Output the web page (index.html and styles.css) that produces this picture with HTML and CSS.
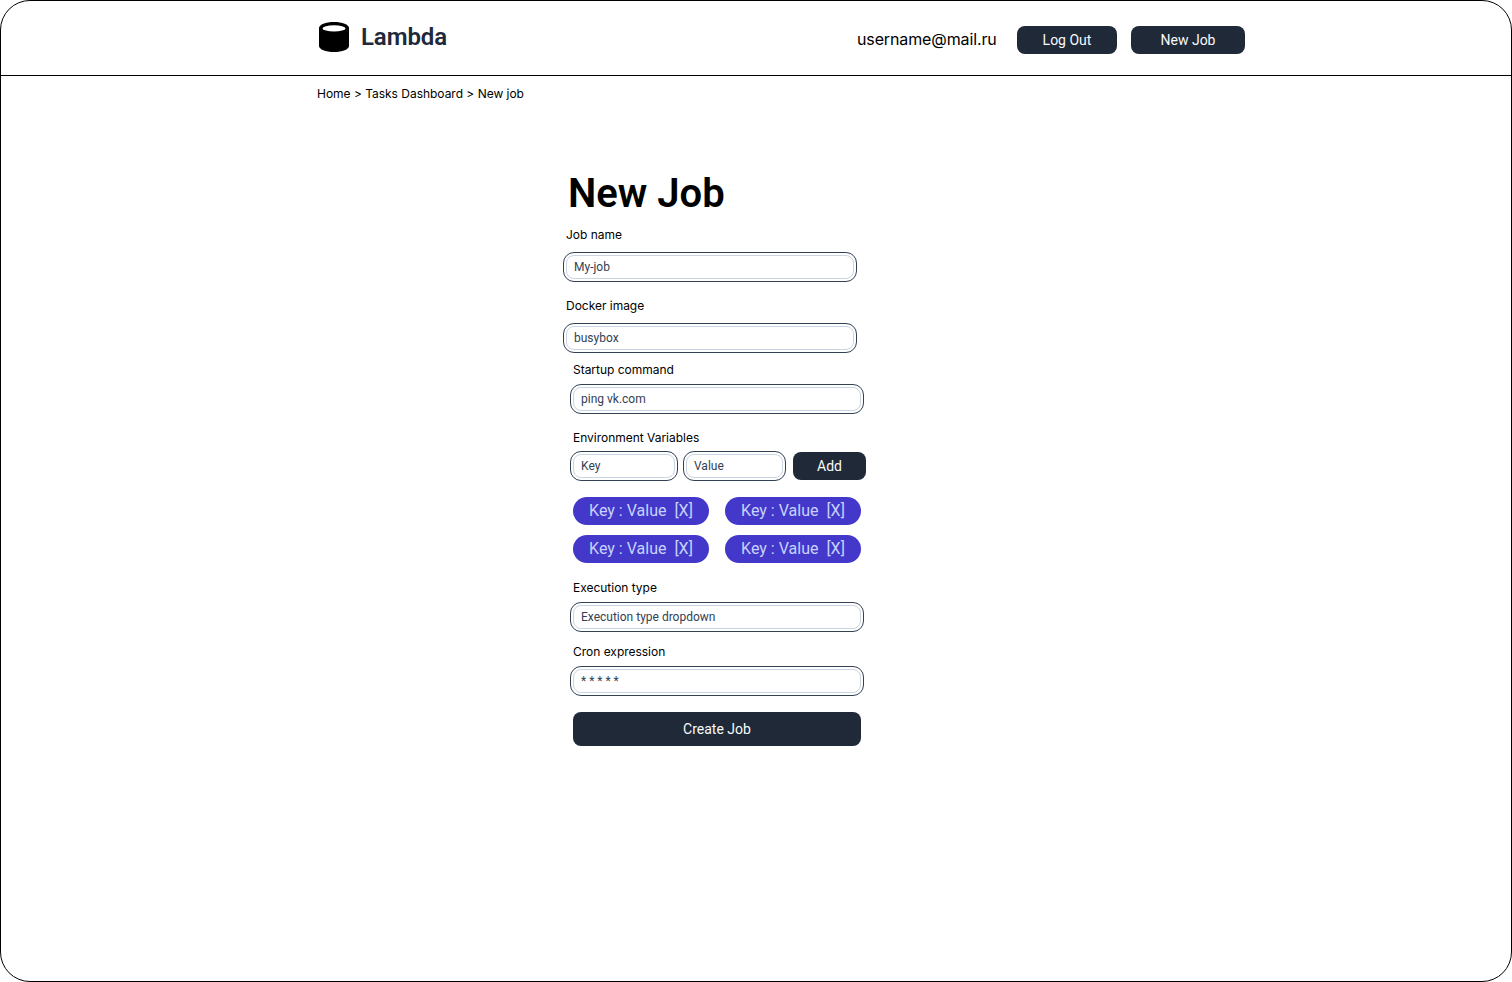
FILE: index.html
```html
<!DOCTYPE html>
<html lang="en">
<head>
<meta charset="utf-8">
<title>Lambda - New Job</title>
<link rel="stylesheet" href="styles.css">
</head>
<body>
<div class="page">
  <header class="header">
    <svg class="logo" width="30" height="30" viewBox="0 0 30 30"><path d="M0 6C0 2.600 6.700 0 15 0s15 2.600 15 6v18c0 3.400-6.700 6-15 6S0 27.400 0 24z" fill="#000"/><ellipse cx="15" cy="6.400" rx="11.500" ry="3.100" fill="#fff"/></svg>
    <span class="brand">Lambda</span>
    <span class="user">username@mail.ru</span>
    <button class="btn logout">Log Out</button>
    <button class="btn newjob">New Job</button>
  </header>
  <nav class="crumbs">Home &gt; Tasks Dashboard &gt; New job</nav>
  <main class="form">
    <h1 class="title">New Job</h1>
    <label class="label">Job name</label>
    <div class="field name"><div class="inner">My-job</div></div>
    <label class="label">Docker image</label>
    <div class="field image"><div class="inner">busybox</div></div>
    <section class="details">
      <label class="label">Startup command</label>
      <div class="field command"><div class="inner">ping vk.com</div></div>
      <label class="label">Environment Variables</label>
      <div class="env">
        <div class="field key"><div class="inner">Key</div></div>
        <div class="field value"><div class="inner">Value</div></div>
        <button class="btn add">Add</button>
      </div>
      <div class="chips">
        <span class="chip">Key : Value&nbsp; [X]</span>
        <span class="chip">Key : Value&nbsp; [X]</span>
        <span class="chip">Key : Value&nbsp; [X]</span>
        <span class="chip">Key : Value&nbsp; [X]</span>
      </div>
      <label class="label">Execution type</label>
      <div class="field execution"><div class="inner">Execution type dropdown</div></div>
      <label class="label">Cron expression</label>
      <div class="field cron"><div class="inner">* * * * *</div></div>
      <button class="btn create">Create Job</button>
    </section>
  </main>
</div>
</body>
</html>
```
FILE: styles.css
```css
* { box-sizing: border-box; }
body { margin: 0; background: #fff; color: #000; font-family: Inter, sans-serif; }
.page { width: 1512px; height: 982px; border: 1px solid #000; border-radius: 30px; overflow: hidden; }
.header { display: flex; height: 75px; border-bottom: 1px solid #000; padding-left: 318px; }
.logo { margin-top: 21px; }
.brand { width: 120px; margin: 20px 0 0 12px; font: 600 24px/32px Roboto, sans-serif; letter-spacing: -0.1px; color: #1e293b; }
.user { width: 140px; margin: 28px 0 0 376px; font-size: 16px; line-height: 20px; letter-spacing: -0.12px; white-space: nowrap; }
.btn { display: block; padding: 0; border: 0; border-radius: 8px; height: 28px; background: #1f2937; color: #f8fafc; font: 400 14px/20px Roboto, sans-serif; text-align: center; }
.logout { width: 100px; margin: 25px 0 0 20px; }
.newjob { width: 114px; margin: 25px 0 0 14px; }
.crumbs { margin: 10px 0 0 316px; font-size: 12px; line-height: 15px; letter-spacing: -0.02px; }
.form { width: 310px; margin: 69px 0 0 562px; }
.title { margin: 0 0 10px 5px; font: 600 40px/47px Roboto, sans-serif; }
.label { display: block; height: 15px; margin-left: 3px; font-size: 12px; line-height: 15px; letter-spacing: -0.02px; }
.field { width: 294px; height: 30px; padding: 2px; border: 1px solid #334155; border-radius: 11px; }
.inner { height: 24px; padding-left: 7px; border: 1px solid #cbd5e1; border-radius: 8px; font: 400 12px/22px Roboto, sans-serif; color: #334155; }
.name { margin: 10px 0 16px; }
.image { margin: 10px 0 9px; }
.details { padding-left: 7px; }
.command { margin: 7px 0 16px; }
.env { display: flex; margin-top: 6px; }
.key { width: 108px; }
.value { width: 103px; margin-left: 5px; }
.add { width: 73px; margin: 1px 0 0 7px; }
.chips { display: grid; grid-template-columns: 136px 136px; gap: 10px 16px; margin: 16px 0 17px 3px; }
.chip { height: 28px; border-radius: 14px; background: #4338ca; color: #c7d2fe; font: 400 16px/28px Roboto, sans-serif; text-align: center; white-space: nowrap; }
.execution { margin: 7px 0 12px; }
.cron { margin: 7px 0 16px; }
.create { width: 288px; height: 34px; margin-left: 3px; }
```
